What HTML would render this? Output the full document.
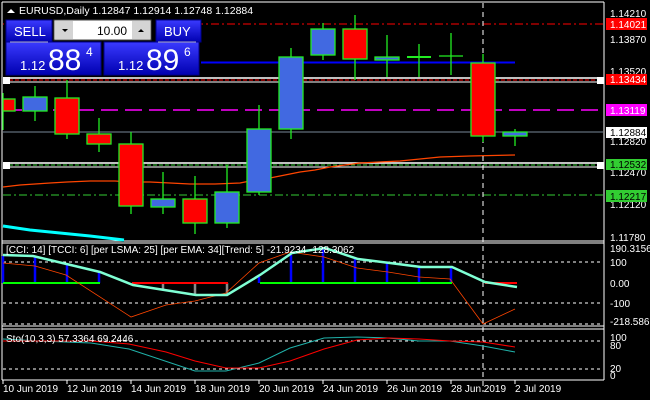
<!DOCTYPE html>
<html><head><meta charset="utf-8"><style>
html,body{margin:0;padding:0;background:#000;width:650px;height:400px;overflow:hidden}
svg{display:block}
text{font-family:"Liberation Sans",sans-serif;font-size:10px;fill:#fff}
</style></head><body>
<svg width="650" height="400" viewBox="0 0 650 400">
<rect width="650" height="400" fill="#000"/>
<!-- frames -->
<line x1="2" y1="2" x2="604" y2="2" stroke="#fff"/>
<line x1="2" y1="2" x2="2" y2="380" stroke="#fff"/>
<line x1="604" y1="2" x2="604" y2="380" stroke="#fff"/>
<line x1="2" y1="241" x2="604" y2="241" stroke="#fff"/>
<line x1="2" y1="243" x2="604" y2="243" stroke="#fff"/>
<line x1="2" y1="326" x2="604" y2="326" stroke="#fff"/>
<line x1="2" y1="329" x2="604" y2="329" stroke="#fff"/>
<line x1="2" y1="380" x2="604" y2="380" stroke="#fff"/>
<!-- horizontal lines main -->
<line x1="3" y1="24" x2="603" y2="24" stroke="#f00" stroke-dasharray="8,3,2,3"/>
<line x1="200" y1="62.5" x2="515" y2="62.5" stroke="#00f" stroke-width="2"/>
<line x1="3" y1="78" x2="603" y2="78" stroke="#fff" stroke-width="1.5"/>
<line x1="3" y1="80" x2="603" y2="80" stroke="#f00" stroke-dasharray="4,2"/>
<line x1="3" y1="82" x2="603" y2="82" stroke="#fff"/>
<line x1="5" y1="110" x2="603" y2="110" stroke="#f0f" stroke-width="1.5" stroke-dasharray="17,7"/>
<line x1="3" y1="132" x2="603" y2="132" stroke="#778899"/>
<line x1="3" y1="163" x2="603" y2="163" stroke="#fff" stroke-width="1.5"/>
<line x1="3" y1="165" x2="603" y2="165" stroke="#3c3" stroke-dasharray="4,2"/>
<line x1="3" y1="167" x2="603" y2="167" stroke="#fff"/>
<line x1="3" y1="195" x2="603" y2="195" stroke="#3c3" stroke-dasharray="8,3,2,3"/>
<rect x="3" y="77" width="7" height="7" fill="#fff"/><rect x="3" y="162" width="7" height="7" fill="#fff"/>
<rect x="597" y="77" width="7" height="7" fill="#fff"/><rect x="597" y="162" width="7" height="7" fill="#fff"/>
<!-- MA orange -->
<polyline fill="none" stroke="#ff4500" stroke-width="1.3" points="3,187 20,185 35,184 50,183 67,182 90,181 115,181 130,182 150,182 170,183 190,184 215,184 240,183 250,181 270,178 285,175 300,172 315,170 330,167 360,163 400,161 420,159 440,157 470,156 515,155"/>
<!-- cyan line -->
<polyline fill="none" stroke="#0ff" stroke-width="3" points="3,226 30,230 60,233 90,236 124,240"/>
<!-- vertical dashed -->
<line x1="483" y1="3" x2="483" y2="392" stroke="#fff" stroke-dasharray="5,4"/>
<!-- candles -->
<g stroke="#2e2" stroke-width="1.3">
<line x1="3" y1="93" x2="3" y2="130"/><rect x="3" y="99" width="12" height="12" fill="#f00"/>
<line x1="35" y1="86" x2="35" y2="121"/><rect x="23" y="97" width="24" height="14" fill="#4169e1"/>
<line x1="67" y1="80" x2="67" y2="139"/><rect x="55" y="98" width="24" height="36" fill="#f00"/>
<line x1="99" y1="118" x2="99" y2="152"/><rect x="87" y="134" width="24" height="10" fill="#f00"/>
<line x1="131" y1="132" x2="131" y2="214"/><rect x="119" y="144" width="24" height="62" fill="#f00"/>
<line x1="163" y1="172" x2="163" y2="214"/><rect x="151" y="199" width="24" height="8" fill="#4169e1"/>
<line x1="195" y1="176" x2="195" y2="234"/><rect x="183" y="199" width="24" height="24" fill="#f00"/>
<line x1="227" y1="165" x2="227" y2="228"/><rect x="215" y="192" width="24" height="31" fill="#4169e1"/>
<line x1="259" y1="105" x2="259" y2="195"/><rect x="247" y="129" width="24" height="63" fill="#4169e1"/>
<line x1="291" y1="48" x2="291" y2="139"/><rect x="279" y="57" width="24" height="72" fill="#4169e1"/>
<line x1="323" y1="23" x2="323" y2="60"/><rect x="311" y="29" width="24" height="26" fill="#4169e1"/>
<line x1="355" y1="15" x2="355" y2="80"/><rect x="343" y="29" width="24" height="30" fill="#f00"/>
<line x1="387" y1="35" x2="387" y2="77"/><rect x="375" y="57" width="24" height="3" fill="#4169e1"/>
<line x1="419" y1="44" x2="419" y2="77"/><line x1="407" y1="57" x2="431" y2="57" stroke-width="2"/>
<line x1="451" y1="33" x2="451" y2="75"/><line x1="439" y1="56" x2="463" y2="56"/>
<line x1="483" y1="54" x2="483" y2="142"/><rect x="471" y="63" width="24" height="73" fill="#f00"/>
<line x1="515" y1="129" x2="515" y2="146"/><rect x="503" y="132" width="24" height="4" fill="#4169e1"/>
</g>
<!-- right axis labels main -->
<g>
<text x="610" y="17">1.14210</text>
<text x="610" y="43">1.13870</text>
<text x="610" y="75">1.13520</text>
<text x="610" y="145">1.12820</text>
<text x="610" y="176">1.12470</text>
<text x="610" y="208">1.12120</text>
<text x="610" y="241">1.11780</text>
<rect x="606" y="18" width="41" height="12" fill="#f00"/><text x="610" y="28">1.14021</text>
<rect x="606" y="74" width="41" height="11" fill="#f00"/><text x="610" y="83">1.13434</text>
<rect x="606" y="104" width="41" height="12" fill="#f0f"/><text x="610" y="114">1.13119</text>
<rect x="606" y="127" width="41" height="11" fill="#fff"/><text x="610" y="136" style="fill:#000">1.12884</text>
<rect x="606" y="159" width="41" height="11" fill="#32cd32"/><text x="610" y="168" style="fill:#000">1.12532</text>
<rect x="606" y="190" width="41" height="12" fill="#32cd32"/><text x="610" y="200" style="fill:#000">1.12217</text>
</g>
<!-- CCI panel -->
<g stroke="#fff" stroke-dasharray="3,3"><line x1="3" y1="262" x2="603" y2="262"/><line x1="3" y1="303" x2="603" y2="303"/><line x1="3" y1="324" x2="603" y2="324"/><line x1="3" y1="341" x2="603" y2="341"/><line x1="3" y1="369" x2="603" y2="369"/></g>
<g stroke="#00f" stroke-width="2.5">
<line x1="3" y1="283" x2="3" y2="256"/><line x1="35" y1="283" x2="35" y2="257"/><line x1="67" y1="283" x2="67" y2="265"/><line x1="99" y1="283" x2="99" y2="272"/>
<line x1="259" y1="283" x2="259" y2="277"/><line x1="291" y1="283" x2="291" y2="255"/><line x1="323" y1="283" x2="323" y2="249"/><line x1="355" y1="283" x2="355" y2="259"/><line x1="387" y1="283" x2="387" y2="263"/><line x1="419" y1="283" x2="419" y2="267"/><line x1="451" y1="283" x2="451" y2="267"/>
</g>
<g stroke="#888" stroke-width="2.5"><line x1="163" y1="283" x2="163" y2="290"/><line x1="195" y1="283" x2="195" y2="295"/><line x1="227" y1="283" x2="227" y2="295"/></g>
<line x1="3" y1="283" x2="100" y2="283" stroke="#0f0" stroke-width="2"/>
<line x1="260" y1="283" x2="452" y2="283" stroke="#0f0" stroke-width="2"/>
<line x1="132" y1="283" x2="228" y2="283" stroke="#f00" stroke-width="2"/>
<line x1="485" y1="283" x2="517" y2="283" stroke="#f00" stroke-width="2"/>
<polyline fill="none" stroke="#ff4500" stroke-width="0.8" points="3,263 35,266 66,275 131,317 166,305 195,301 226,293 259,263 290,252 324,257 357,268 388,272 419,277 450,279 483,324 515,309"/>
<polyline fill="none" stroke="#7fffd4" stroke-width="2.5" points="3,255 33,256 100,272 133,285 196,295 227,295 260,275 292,253 325,248 358,259 390,263 421,267 452,267 485,282 517,287"/>
<text x="6" y="253">[CCI: 14] [TCCI: 6] [per LSMA: 25] [per EMA: 34][Trend: 5]  -21.9234 -128.3062</text>
<text x="610" y="252">190.3156</text>
<text x="610" y="266">100</text>
<text x="610" y="287">0.00</text>
<text x="610" y="307">-100</text>
<text x="610" y="325">-218.5865</text>
<!-- Stoch -->
<polyline fill="none" stroke="#20b2aa" stroke-width="1" points="3,339 39,341 91,343 129,349 195,371 226,371 259,363 290,348 324,338 357,337 388,338 419,341 450,341 483,346 515,352"/>
<polyline fill="none" stroke="#f00" stroke-width="1" points="3,341 91,341 129,344 166,352 195,361 226,368 259,368 290,361 324,349 357,340 388,338 419,339 450,341 483,342 515,347"/>
<text x="6" y="342">Sto(10,3,3) 57.3364 69.2446</text>
<text x="610" y="341">100</text><text x="610" y="349">80</text><text x="610" y="372">20</text><text x="610" y="379">0</text>
<!-- time axis -->
<g stroke="#fff"><line x1="3" y1="380" x2="3" y2="384"/><line x1="67" y1="380" x2="67" y2="384"/><line x1="131" y1="380" x2="131" y2="384"/><line x1="195" y1="380" x2="195" y2="384"/><line x1="259" y1="380" x2="259" y2="384"/><line x1="323" y1="380" x2="323" y2="384"/><line x1="387" y1="380" x2="387" y2="384"/><line x1="451" y1="380" x2="451" y2="384"/><line x1="515" y1="380" x2="515" y2="384"/></g>
<g><text x="3" y="392">10 Jun 2019</text><text x="67" y="392">12 Jun 2019</text><text x="131" y="392">14 Jun 2019</text><text x="195" y="392">18 Jun 2019</text><text x="259" y="392">20 Jun 2019</text><text x="323" y="392">24 Jun 2019</text><text x="387" y="392">26 Jun 2019</text><text x="451" y="392">28 Jun 2019</text><text x="515" y="392">2 Jul 2019</text></g>
<!-- title -->
<polygon points="7,13 11,9 15,13" fill="#fff"/>
<text x="19" y="14" style="font-size:10.5px">EURUSD,Daily  1.12847 1.12914 1.12748 1.12884</text>
<!-- trade panel -->
<rect x="4" y="19" width="197" height="58" fill="#000"/>
<defs><linearGradient id="g" x1="0" y1="0" x2="0" y2="1"><stop offset="0" stop-color="#3a3aff"/><stop offset="1" stop-color="#0000b0"/></linearGradient></defs>
<rect x="6" y="20" width="46" height="22" fill="url(#g)" stroke="#00008b"/>
<rect x="6" y="42" width="95" height="33" fill="url(#g)" stroke="#00008b"/>
<rect x="156" y="20" width="45" height="22" fill="url(#g)" stroke="#00008b"/>
<rect x="104" y="42" width="95" height="33" fill="url(#g)" stroke="#00008b"/>
<line x1="10" y1="42" x2="48" y2="42" stroke="#aab"/><line x1="158" y1="42" x2="196" y2="42" stroke="#aab"/>
<rect x="54" y="20" width="97" height="20" fill="#fff" stroke="#444"/>
<rect x="55" y="21" width="18" height="18" fill="#d4d4d4"/><rect x="132" y="21" width="18" height="18" fill="#d4d4d4"/>
<polygon points="62,29 68,29 65,32" fill="#000"/><polygon points="138,32 144,32 141,29" fill="#000"/>
<text x="127" y="35" text-anchor="end" style="fill:#000;font-size:12px">10.00</text>
<text x="14" y="36" style="font-size:13px">SELL</text>
<text x="164" y="36" style="font-size:13px">BUY</text>
<text x="20" y="70" style="font-size:13px">1.12</text><text x="48" y="70" style="font-size:30px">88</text><text x="86" y="56" style="font-size:12px">4</text>
<text x="118" y="70" style="font-size:13px">1.12</text><text x="146" y="70" style="font-size:30px">89</text><text x="184" y="56" style="font-size:12px">6</text>
</svg>
</body></html>
